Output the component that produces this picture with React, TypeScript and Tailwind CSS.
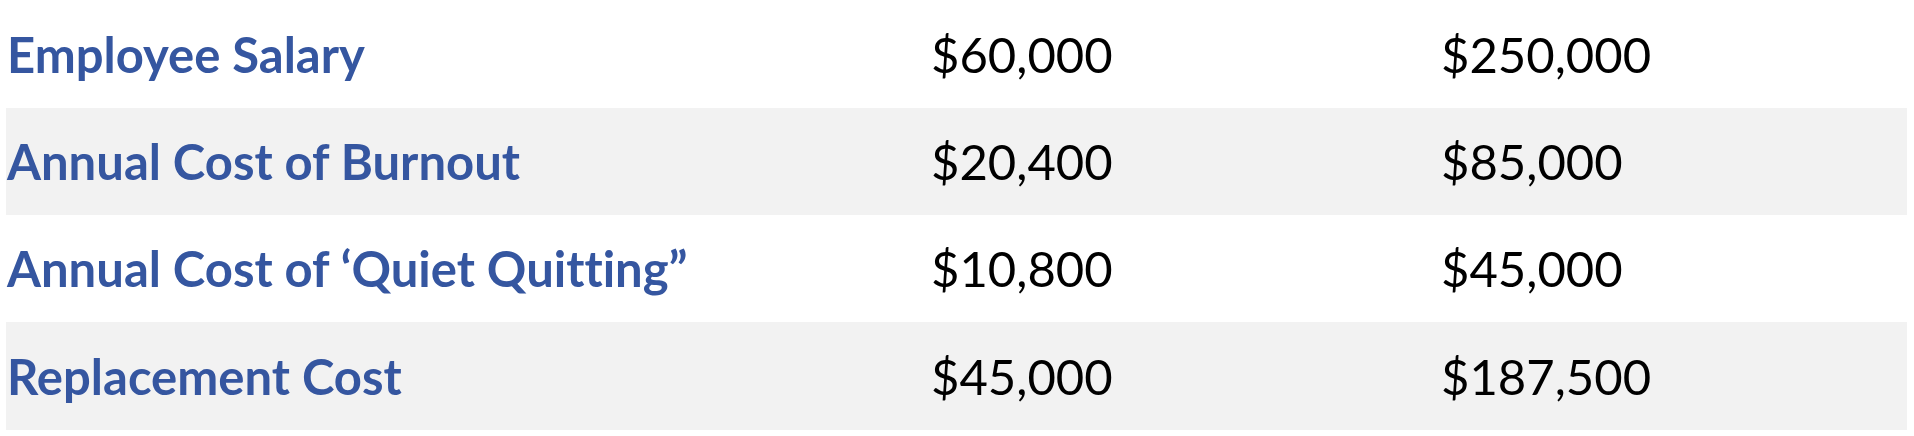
const rows = [
  { label: "Employee Salary", low: "$60,000", high: "$250,000" },
  { label: "Annual Cost of Burnout", low: "$20,400", high: "$85,000" },
  { label: "Annual Cost of \u2018Quiet Quitting\u201d", low: "$10,800", high: "$45,000" },
  { label: "Replacement Cost", low: "$45,000", high: "$187,500" },
];

export default function App() {
  return (
    <div className="w-[1914px] h-[436px] bg-white pl-[6px] pr-[7px] font-['Lato',sans-serif] [font-variant-ligatures:none]">
      {rows.map((row, i) => (
        <div
          key={row.label}
          className={`grid grid-cols-[925px_510px_1fr] items-center text-[49px] leading-[1.2] ${
            i % 2 === 1 ? "bg-[#f2f2f2]" : "bg-white"
          } ${i === 0 || i === 3 ? "h-[108px]" : "h-[107px]"}`}
        >
          <div className="pl-[1px] font-bold text-[#3556a0] whitespace-nowrap">{row.label}</div>
          <div className="text-black">{row.low}</div>
          <div className="text-black">{row.high}</div>
        </div>
      ))}
    </div>
  );
}
